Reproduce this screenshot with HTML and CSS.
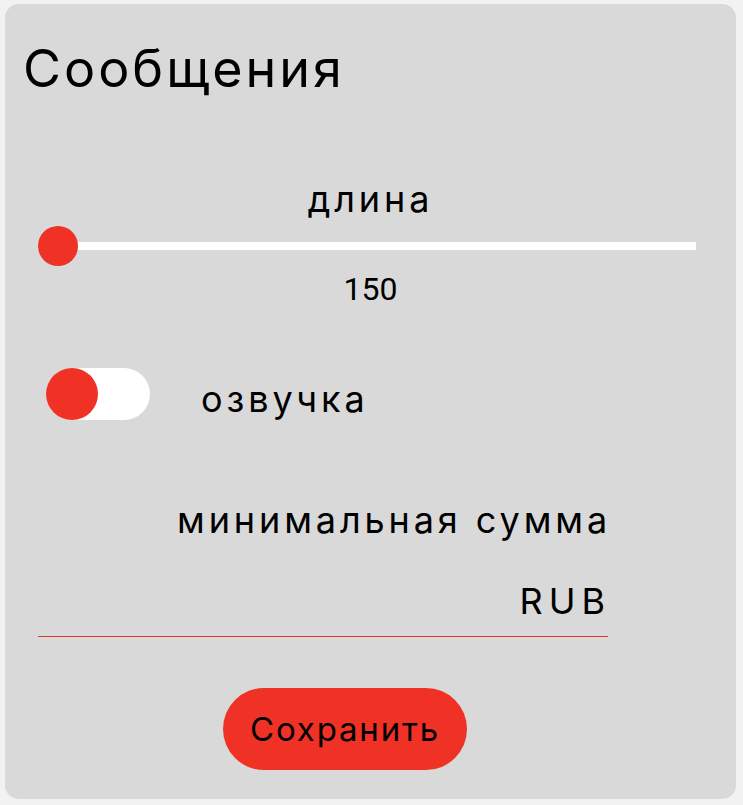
FILE: index.html
```html
<!DOCTYPE html>
<html lang="ru">
<head>
<meta charset="utf-8">
<title>Сообщения</title>
<link rel="stylesheet" href="styles.css">
</head>
<body>
<div class="card">
  <h1 class="title">Сообщения</h1>
  <div class="label label-center">длина</div>
  <input class="range" type="range" min="150" max="1000" value="150">
  <div class="value">150</div>
  <div class="toggle-row">
    <div class="toggle"><span class="knob"></span></div>
    <span class="label toggle-label">озвучка</span>
  </div>
  <div class="sum">
    <div class="label sum-label">минимальная сумма</div>
    <div class="label sum-field"><span class="currency">RUB</span></div>
  </div>
  <button class="save">Сохранить</button>
</div>
</body>
</html>
```

FILE: styles.css
```css
html, body {
  margin: 0;
  background: #f2f2f2;
}
body {
  padding: 4px 7px 0 5px;
  font-family: Inter, "Noto Sans", sans-serif;
  color: #000;
}
.card {
  background: #d9d9d9;
  border-radius: 14px;
  height: 795px;
  box-sizing: border-box;
  padding-top: 39px;
  display: flex;
  flex-direction: column;
}
.title {
  margin: 0 0 0 18px;
  font-size: 52px;
  line-height: 52px;
  font-weight: 400;
  letter-spacing: 3px;
}
.label {
  font-size: 36px;
  line-height: 36px;
  letter-spacing: 3.9px;
}
.label-center {
  margin-top: 86px;
  text-align: center;
}
.range {
  -webkit-appearance: none;
  appearance: none;
  margin: 9px 0 0 33px;
  width: 658px;
  height: 40px;
  background: transparent;
  padding: 0;
}
.range::-webkit-slider-runnable-track {
  height: 8px;
  background: #fff;
}
.range::-webkit-slider-thumb {
  -webkit-appearance: none;
  width: 40px;
  height: 40px;
  border-radius: 50%;
  background: #f03125;
  margin-top: -16px;
  border: none;
}
.value {
  margin-top: 7px;
  text-align: center;
  font-family: Roboto, sans-serif;
  font-size: 32px;
  line-height: 32px;
}
.toggle-row {
  margin: 63px 0 0 41px;
  display: flex;
  align-items: flex-start;
}
.toggle {
  width: 104px;
  height: 52px;
  border-radius: 26px;
  background: #fff;
  display: flex;
}
.knob {
  width: 52px;
  height: 52px;
  border-radius: 50%;
  background: #f03125;
}
.toggle-label {
  margin: 13px 0 0 51px;
}
.sum {
  margin: 82px 0 0 33px;
  width: 570px;
  display: flex;
  flex-direction: column;
  align-items: flex-end;
}
.sum-label {
  margin-right: -3px;
}
.sum-field {
  margin-top: 45px;
  align-self: stretch;
  text-align: right;
  padding: 0 0 17px 0;
  border-bottom: 1px solid #e0392e;
}
.currency {
  letter-spacing: 6px;
  margin-right: -3px;
}
.save {
  margin: 51px 0 0 218px;
  width: 244px;
  height: 82px;
  border: none;
  border-radius: 41px;
  background: #f03125;
  color: #000;
  font-family: Inter, "Noto Sans", sans-serif;
  font-size: 33px;
  letter-spacing: 1.8px;
  padding: 0;
  cursor: pointer;
}
```
